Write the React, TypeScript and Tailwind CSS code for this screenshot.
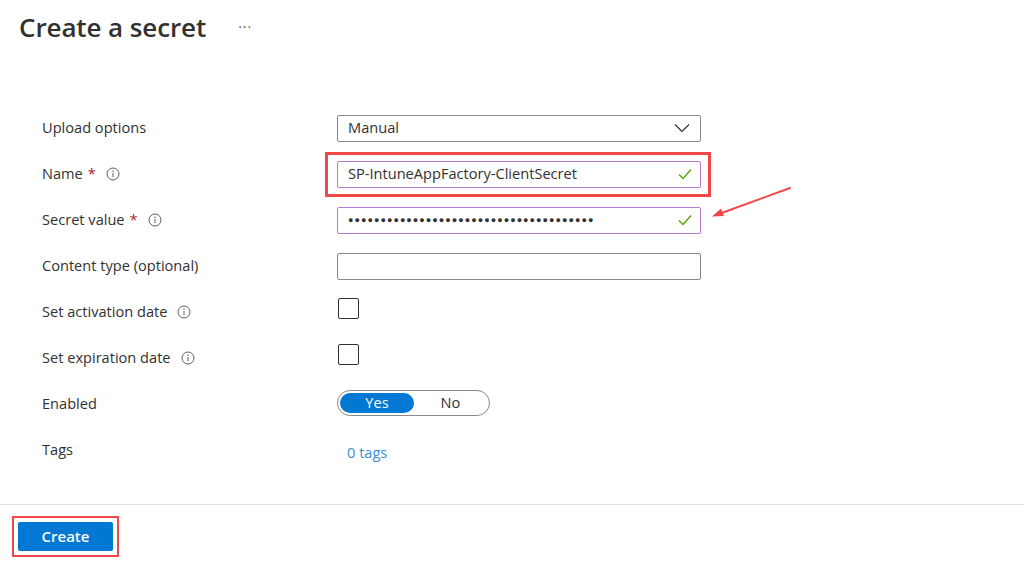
import React from 'react';

const Info: React.FC = () => (
  <svg width="14" height="14" viewBox="0 0 14 14" className="ml-[10px] shrink-0">
    <circle cx="7" cy="7" r="6" fill="none" stroke="#605e5c" strokeWidth="1" />
    <circle cx="7" cy="4.3" r="0.8" fill="#605e5c" />
    <rect x="6.5" y="6" width="1" height="4.2" fill="#605e5c" />
  </svg>
);

const Check: React.FC = () => (
  <svg width="14" height="12" viewBox="0 0 14 12" className="shrink-0">
    <path d="M1 6.5 L5 10.5 L13 1.5" fill="none" stroke="#57a300" strokeWidth="1.3" />
  </svg>
);

const Row: React.FC<{ label: React.ReactNode; children?: React.ReactNode }> = ({ label, children }) => (
  <div className="flex items-center h-[46px]">
    <div className="w-[295px] flex items-center text-[14.6px] text-[#323130]">{label}</div>
    <div className="flex-1 flex items-center">{children}</div>
  </div>
);

const Req: React.FC = () => <span className="text-[#a4262c] ml-[5px]">*</span>;

export default function App() {
  return (
    <div
      className="relative w-[1024px] h-[563px] bg-white overflow-hidden"
      style={{ fontFamily: '"Open Sans", "Noto Sans", sans-serif' }}
    >
      <div className="flex items-center h-[54px] pl-[19px]">
        <h1 className="text-[26px] font-semibold text-[#323130] tracking-[-0.1px]">Create a secret</h1>
        <span className="ml-[32px] text-[14px] text-[#605e5c] tracking-[1px] -mt-[2px]">···</span>
      </div>

      <div className="pl-[42px] pt-[51px]">
        <Row label="Upload options">
          <div className="w-[364px] h-[27px] border border-[#8a8886] rounded-[2px] flex items-center justify-between pl-[10px] pr-[10px] text-[14.6px] text-[#323130]">
            <span>Manual</span>
            <svg width="16" height="10" viewBox="0 0 16 10">
              <path d="M1 1.5 L8 8.5 L15 1.5" fill="none" stroke="#323130" strokeWidth="1.2" />
            </svg>
          </div>
        </Row>
        <Row label={<>Name<Req /><Info /></>}>
          <div className="relative">
            <div className="absolute -left-[12px] -top-[9px] w-[386px] h-[45px] border-[3px] border-[#f04848] pointer-events-none" />
            <div className="w-[364px] h-[27px] border border-[#b57bd0] rounded-[2px] flex items-center justify-between pl-[10px] pr-[8px] text-[14.6px] text-[#323130]">
              <span>SP-IntuneAppFactory-ClientSecret</span>
              <Check />
            </div>
          </div>
        </Row>
        <Row label={<>Secret value<Req /><Info /></>}>
          <div className="w-[364px] h-[27px] border border-[#b57bd0] rounded-[2px] flex items-center justify-between pl-[10px] pr-[8px] text-[#323130]">
            <span className="text-[9px] tracking-[1.05px]">{'●'.repeat(38)}</span>
            <Check />
          </div>
        </Row>
        <Row label="Content type (optional)">
          <div className="w-[364px] h-[27px] border border-[#8a8886] rounded-[2px]" />
        </Row>
        <Row label={<>Set activation date<Info /></>}>
          <div className="w-[21px] h-[21px] border border-[#323130] rounded-[2px] -mt-[7px] ml-[1px]" />
        </Row>
        <Row label={<>Set expiration date<Info /></>}>
          <div className="w-[21px] h-[21px] border border-[#323130] rounded-[2px] -mt-[8px] ml-[1px]" />
        </Row>
        <Row label="Enabled">
          <div className="w-[153px] h-[26px] border border-[#8a8886] rounded-full flex items-center p-[2px] -mt-[3px]">
            <div className="w-[74px] h-[20px] rounded-full bg-[#0078d4] text-white text-[14.6px] flex items-center justify-center">Yes</div>
            <div className="flex-1 text-[14.6px] text-[#323130] text-center">No</div>
          </div>
        </Row>
        <Row label="Tags">
          <span className="ml-[10px] mt-[6px] text-[14.6px] text-[#3e8ed8]">0 tags</span>
        </Row>
      </div>

      <div className="mt-[31px] border-t border-[#e1dfdd]" />

      <div className="pl-[12px] pt-[11px]">
        <div className="inline-flex border-[2px] border-[#f04848] p-[4px]">
          <button className="w-[95px] h-[29px] bg-[#0078d4] rounded-[2px] text-white text-[15px] font-semibold flex items-center justify-center">
            Create
          </button>
        </div>
      </div>

      <svg className="absolute left-[705px] top-[182px]" width="92" height="42" viewBox="0 0 92 42">
        <line x1="85" y1="6" x2="14" y2="32" stroke="#f04848" strokeWidth="2" strokeLinecap="round" />
        <path d="M7 34.5 L16 26.5 L19 34 Z" fill="#f04848" />
      </svg>
    </div>
  );
}
